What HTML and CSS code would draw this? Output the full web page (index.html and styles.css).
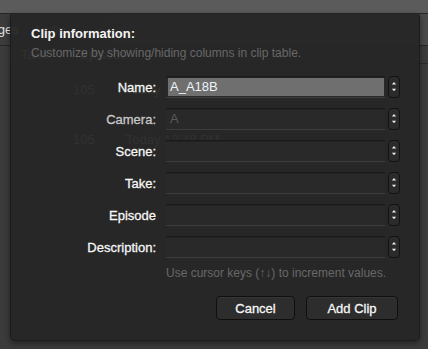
FILE: index.html
```html
<!DOCTYPE html>
<html lang="en">
<head>
  <meta charset="UTF-8">
  <title>Clip information</title>
  <link rel="stylesheet" href="styles.css">
</head>
<body>
  <div class="app">
    <div class="titlebar"></div>
    <div class="toolbar">
      <span class="tab">Images</span>
      <span class="tab faint">Audio</span>
    </div>
    <div class="table">
      <div class="thead">
        <span class="col-take">Take</span>
        <span class="col-ep">Episode</span>
      </div>
      <div class="trow">
        <span class="col-num">105</span>
        <span class="col-date">Today 12:48 PM</span>
      </div>
      <div class="trow">
        <span class="col-num">105</span>
        <span class="col-date">Today 12:48 PM</span>
      </div>
    </div>

    <div class="sheet">
      <h1 class="sheet-title">Clip information:</h1>
      <p class="sheet-sub">Customize by showing/hiding columns in clip table.</p>

      <div class="form">
        <label class="lbl" for="name">Name:</label>
        <div class="field"><span class="selected">A_A18B</span></div>
        <div class="stepper">
          <svg width="12" height="20" viewBox="0 0 12 20"><polygon points="3.5,7 8.5,7 6,4"/><polygon points="3.5,12 8.5,12 6,15"/></svg>
        </div>

        <label class="lbl dim">Camera:</label>
        <div class="field"><span class="placeholder">A</span></div>
        <div class="stepper">
          <svg width="12" height="20" viewBox="0 0 12 20"><polygon points="3.5,7 8.5,7 6,4"/><polygon points="3.5,12 8.5,12 6,15"/></svg>
        </div>

        <label class="lbl">Scene:</label>
        <div class="field"></div>
        <div class="stepper">
          <svg width="12" height="20" viewBox="0 0 12 20"><polygon points="3.5,7 8.5,7 6,4"/><polygon points="3.5,12 8.5,12 6,15"/></svg>
        </div>

        <label class="lbl">Take:</label>
        <div class="field"></div>
        <div class="stepper">
          <svg width="12" height="20" viewBox="0 0 12 20"><polygon points="3.5,7 8.5,7 6,4"/><polygon points="3.5,12 8.5,12 6,15"/></svg>
        </div>

        <label class="lbl">Episode</label>
        <div class="field"></div>
        <div class="stepper">
          <svg width="12" height="20" viewBox="0 0 12 20"><polygon points="3.5,7 8.5,7 6,4"/><polygon points="3.5,12 8.5,12 6,15"/></svg>
        </div>

        <label class="lbl">Description:</label>
        <div class="field"></div>
        <div class="stepper">
          <svg width="12" height="20" viewBox="0 0 12 20"><polygon points="3.5,7 8.5,7 6,4"/><polygon points="3.5,12 8.5,12 6,15"/></svg>
        </div>

        <p class="hint">Use cursor keys (↑↓) to increment values.</p>
      </div>

      <div class="actions">
        <button class="btn cancel">Cancel</button>
        <button class="btn add">Add Clip</button>
      </div>
    </div>
  </div>
</body>
</html>
```

FILE: styles.css
```css
html, body {
  margin: 0;
  padding: 0;
}

body {
  background-color: #3a3a3a;
  font-family: "Liberation Sans", Arial, sans-serif;
  color: #eeeeee;
  width: 428px;
  height: 349px;
  overflow: hidden;
}

.app {
  position: relative;
  width: 428px;
  height: 349px;
  background-color: #3b3b3b;
}

.titlebar {
  height: 13px;
  background-color: #5b5b5b;
  border-bottom: 1px solid #262626;
}

.toolbar {
  height: 31px;
  background: linear-gradient(to right, #3b3b3b, #4a4a4a);
  border-bottom: 1px solid #262626;
  display: flex;
  align-items: center;
  gap: 14px;
  margin-left: -24px;
  font-size: 13px;
}

.tab {
  color: #e6e6e6;
}

.tab.faint {
  color: #999999;
}

.table {
  font-size: 13px;
  color: #c8c8c8;
}

.thead {
  height: 17px;
  display: flex;
  align-items: center;
  border-left: 1px solid #555;
  margin-left: 15px;
  padding-left: 5px;
  gap: 32px;
  border-bottom: 1px solid #2c2c2c;
}

.trow {
  height: 50px;
  display: flex;
  align-items: center;
  padding-left: 73px;
  gap: 31px;
}

.trow:first-of-type {
  align-items: flex-end;
}

/* the sheet sits over the app window */
.sheet {
  position: absolute;
  left: 10px;
  top: 14px;
  width: 410px;
  height: 327px;
  box-sizing: border-box;
  padding: 12px 21px 0 20px;
  background-color: rgba(38, 38, 38, 0.94);
  border: 1px solid #1c1c1c;
  border-top: none;
  border-radius: 2px 2px 5px 5px;
  box-shadow: 0 2px 6px rgba(0, 0, 0, 0.45);
}

.sheet-title {
  margin: 0;
  font-size: 13px;
  line-height: 16px;
  font-weight: bold;
  color: #f4f4f4;
}

.sheet-sub {
  margin: 4px 0 0 0;
  font-size: 12px;
  line-height: 14px;
  color: #686868;
}

.form {
  display: grid;
  grid-template-columns: 125px 219px 12px;
  column-gap: 10px;
  row-gap: 10px;
  margin-top: 16px;
  align-items: center;
}

.form .stepper {
  margin-left: -7px;
}

.lbl {
  text-align: right;
  font-size: 13px;
  color: #f6f6f6;
  -webkit-text-stroke: 0.3px #f6f6f6;
}

.lbl.dim {
  color: #c8c8c8;
  -webkit-text-stroke: 0.3px #c8c8c8;
}

.field {
  height: 22px;
  box-sizing: border-box;
  background-color: #292929;
  border-top: 1px solid #1a1a1a;
  border-bottom: 1px solid #3c3c3c;
  box-shadow: inset 0 1px 0 #222;
  padding: 1px 1px 1px 2px;
  font-size: 13px;
  line-height: 18px;
}

.selected {
  display: block;
  height: 18px;
  background-color: #6f6f6f;
  color: #eef3f8;
  padding-left: 2px;
}

.placeholder {
  display: block;
  padding-left: 2px;
  color: #5a5a5a;
}

.stepper {
  width: 12px;
  height: 22px;
  box-sizing: border-box;
  border: 1px solid #121212;
  border-radius: 4px;
  background-color: #2b2b2b;
  display: flex;
  align-items: center;
  justify-content: center;
}

.stepper svg {
  display: block;
  fill: #eeeeee;
}

.hint {
  grid-column: 2 / 4;
  margin: -2px 0 0 0;
  font-size: 12px;
  line-height: 14px;
  color: #686868;
  white-space: nowrap;
}

.actions {
  display: flex;
  justify-content: flex-end;
  gap: 11px;
  margin-top: 16px;
}

.btn {
  height: 24px;
  box-sizing: border-box;
  border: 1px solid #0f0f0f;
  border-radius: 4px;
  background-color: #2d2d2d;
  box-shadow: inset 0 1px 0 #363636;
  color: #f6f6f6;
  -webkit-text-stroke: 0.3px #f6f6f6;
  font-family: "Liberation Sans", Arial, sans-serif;
  font-size: 13px;
  padding: 0;
}

.btn.cancel {
  width: 79px;
}

.btn.add {
  width: 92px;
}
```
